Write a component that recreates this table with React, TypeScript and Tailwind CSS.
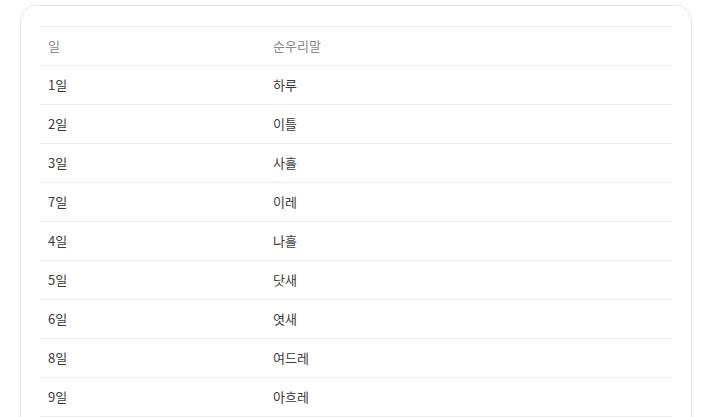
export default function App() {
  const rows = [
    ["1일", "하루"],
    ["2일", "이틀"],
    ["3일", "사흘"],
    ["7일", "이레"],
    ["4일", "나흘"],
    ["5일", "닷새"],
    ["6일", "엿새"],
    ["8일", "여드레"],
    ["9일", "아흐레"],
  ];
  return (
    <div className="w-[707px] h-[417px] overflow-hidden bg-white" style={{ fontFamily: '"Noto Sans CJK KR", "Noto Sans", sans-serif' }}>
      <div className="ml-[20px] mt-[5px] w-[672px] border border-[#e6e6e6] rounded-2xl pt-5 px-[19px] pb-5">
        <table className="w-full border-collapse text-[13px] border-b border-[#ececec]">
          <thead>
            <tr className="border-t border-[#ececec]">
              <th className="w-[225px] h-[39px] px-2 text-left font-normal text-[#8a8a8a]">일</th>
              <th className="h-[39px] px-2 text-left font-normal text-[#8a8a8a]">순우리말</th>
            </tr>
          </thead>
          <tbody>
            {rows.map(([a, b]) => (
              <tr key={a} className="border-t border-[#ececec]">
                <td className="h-[39px] px-2 text-[#3a3a3a]">{a}</td>
                <td className="h-[39px] px-2 text-[#3a3a3a]">{b}</td>
              </tr>
            ))}
          </tbody>
        </table>
      </div>
    </div>
  );
}
